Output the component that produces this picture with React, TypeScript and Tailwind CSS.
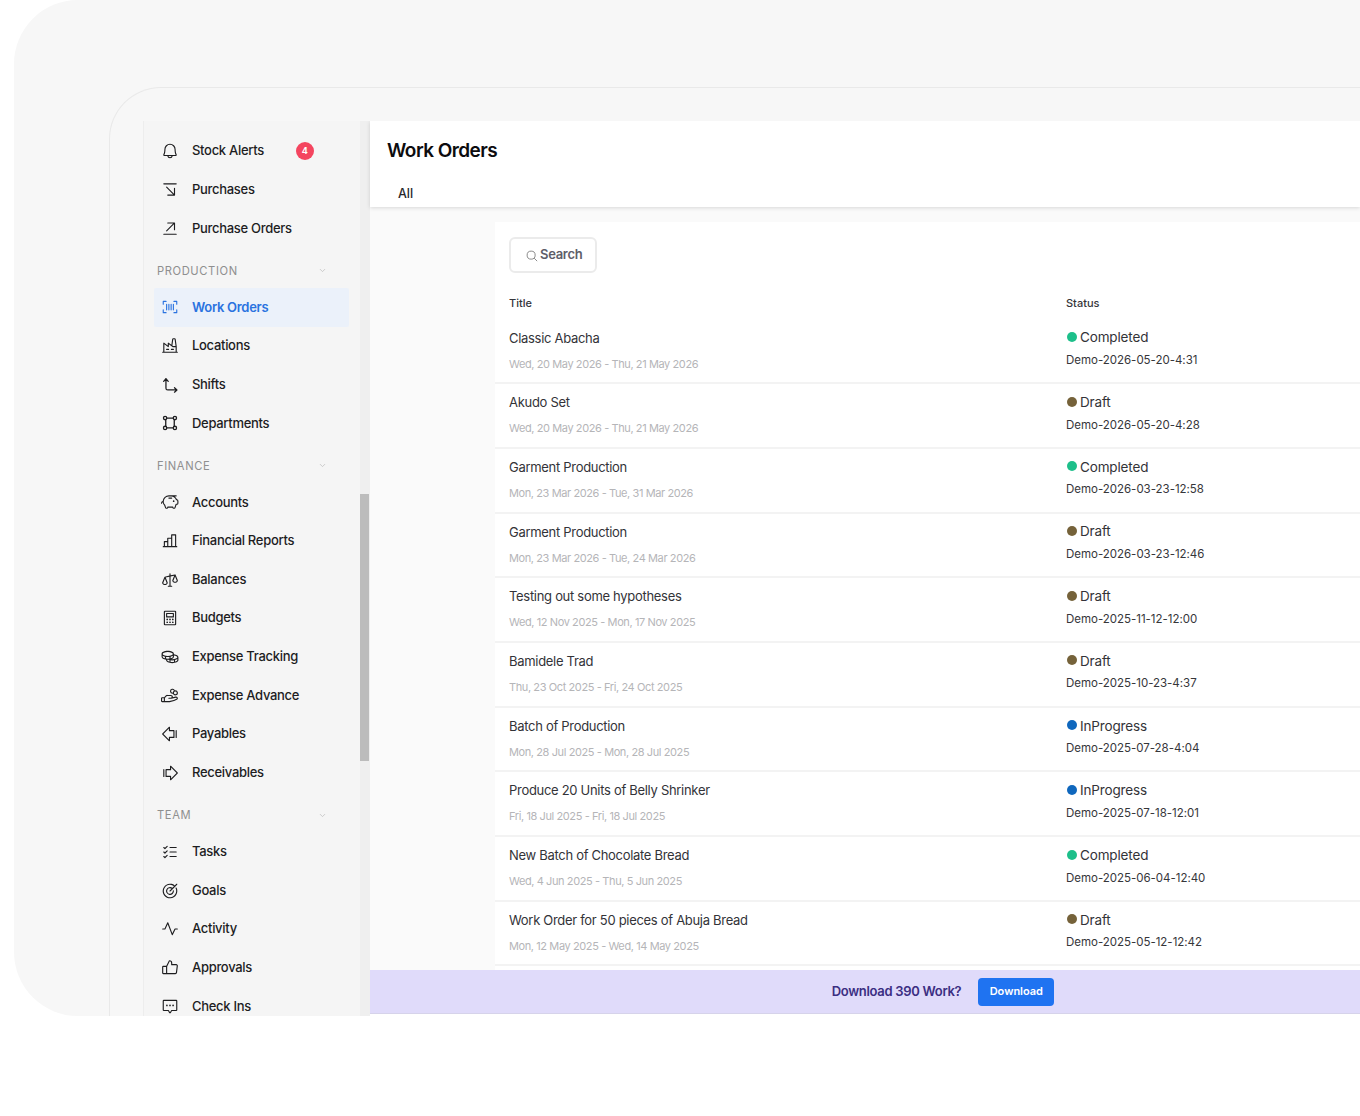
import React from "react";
import { ChevronDown } from "lucide-react";
import {
  PiBell, PiArrowLineDownRight, PiArrowLineUpRight, PiBarcode, PiFactory, PiPiggyBank, PiChartBar, PiScales,
  PiCalculator, PiCoins, PiHandCoins, PiArrowFatLineLeft, PiArrowFatLineRight, PiListChecks, PiTarget,
  PiPulse, PiThumbsUp, PiChatCenteredDots,
} from "react-icons/pi";

const font = "font-['Inter','Liberation_Sans',sans-serif]";

function ShiftsIcon(p: { className?: string }) {
  return (
    <svg viewBox="0 0 20 20" fill="none" stroke="currentColor" strokeWidth="1.4" className={p.className}>
      <path d="M3 6l2.5-3L8 6M5.5 3v10.5a2 2 0 0 0 2 2H17.5M15 13l2.7 2.5L15 18" strokeLinecap="round" strokeLinejoin="round" />
    </svg>
  );
}
function DeptIcon(p: { className?: string }) {
  return (
    <svg viewBox="-1 -1 22 22" fill="none" stroke="currentColor" strokeWidth="1.6" className={p.className}>
      <circle cx="4" cy="4" r="2" /><circle cx="16" cy="4" r="2" /><circle cx="4" cy="16" r="2" /><circle cx="16" cy="16" r="2" />
      <path d="M6 4h8M6 16h8M4.8 6v8M15.2 6v8" />
    </svg>
  );
}

type Item = { label: string; icon: React.ComponentType<{ className?: string }>; badge?: string; active?: boolean };

function NavItem({ item }: { item: Item }) {
  const I = item.icon;
  return (
    <div className={`h-[38.67px] ml-[10px] mr-[11px] flex items-center rounded-[2px] ${item.active ? "bg-[#ebf1fa] text-[#2a73e0]" : "text-[#1d1d1f]"}`}>
      <div className="w-[38px] flex shrink-0 pl-[7px]"><I className="w-[18px] h-[18px]" /></div>
      <span className={`text-[13px] tracking-[-0.3px] ${item.active ? "font-semibold" : "font-medium"}`}>{item.label}</span>
      {item.badge && (
        <span className="ml-[32px] w-[18px] h-[18px] rounded-full bg-[#f4455f] text-white text-[9px] font-bold flex items-center justify-center">{item.badge}</span>
      )}
    </div>
  );
}

function Section({ title }: { title: string }) {
  return (
    <div className="h-[34px] mt-[6.33px] flex items-center justify-between pl-[13px] pr-[33px] text-[#8f8f8f]">
      <span className="text-[11.2px] font-normal tracking-[0.6px]">{title}</span>
      <ChevronDown className="w-[9px] h-[9px] text-[#bdbdbd]" />
    </div>
  );
}

const rows = [
  ["Classic Abacha", "Wed, 20 May 2026 - Thu, 21 May 2026", "Completed", "Demo-2026-05-20-4:31"],
  ["Akudo Set", "Wed, 20 May 2026 - Thu, 21 May 2026", "Draft", "Demo-2026-05-20-4:28"],
  ["Garment Production", "Mon, 23 Mar 2026 - Tue, 31 Mar 2026", "Completed", "Demo-2026-03-23-12:58"],
  ["Garment Production", "Mon, 23 Mar 2026 - Tue, 24 Mar 2026", "Draft", "Demo-2026-03-23-12:46"],
  ["Testing out some hypotheses", "Wed, 12 Nov 2025 - Mon, 17 Nov 2025", "Draft", "Demo-2025-11-12-12:00"],
  ["Bamidele Trad", "Thu, 23 Oct 2025 - Fri, 24 Oct 2025", "Draft", "Demo-2025-10-23-4:37"],
  ["Batch of Production", "Mon, 28 Jul 2025 - Mon, 28 Jul 2025", "InProgress", "Demo-2025-07-28-4:04"],
  ["Produce 20 Units of Belly Shrinker", "Fri, 18 Jul 2025 - Fri, 18 Jul 2025", "InProgress", "Demo-2025-07-18-12:01"],
  ["New Batch of Chocolate Bread", "Wed, 4 Jun 2025 - Thu, 5 Jun 2025", "Completed", "Demo-2025-06-04-12:40"],
  ["Work Order for 50 pieces of Abuja Bread", "Mon, 12 May 2025 - Wed, 14 May 2025", "Draft", "Demo-2025-05-12-12:42"],
];

const dot: Record<string, string> = {
  Completed: "bg-[#1dbf8a]",
  Draft: "bg-[#75623a]",
  InProgress: "bg-[#0f67bd]",
};

function Row({ r }: { r: string[] }) {
  return (
    <div className="h-[64.7px] flex border-b-2 border-[#f3f3f3] pl-[14px]">
      <div className="w-[557px] shrink-0 flex flex-col">
        <div className="mt-[8px] h-[20px] leading-[20px] text-[13px] tracking-[-0.3px] text-[#333338]">{r[0]}</div>
        <div className="mt-[6px] h-[20px] leading-[20px] text-[11px] tracking-[-0.4px] text-[#b5b5b8]">{r[1]}</div>
      </div>
      <div className="flex flex-col">
        <div className="mt-[8px] h-[20px] flex items-center text-[13.5px] tracking-[-0.15px] text-[#333338]">
          <span className={`ml-[1px] w-[10px] h-[10px] rounded-full mr-[3px] -mt-[1px] ${dot[r[2]]}`} />
          {r[2]}
        </div>
        <div className="mt-[2.5px] h-[20px] leading-[20px] text-[11.5px] tracking-[-0.02px] text-[#36363a]">{r[3]}</div>
      </div>
    </div>
  );
}

export default function App() {
  const groups: (Item | string)[] = [
    { label: "Stock Alerts", icon: PiBell, badge: "4" },
    { label: "Purchases", icon: PiArrowLineDownRight },
    { label: "Purchase Orders", icon: PiArrowLineUpRight },
    "PRODUCTION",
    { label: "Work Orders", icon: PiBarcode, active: true },
    { label: "Locations", icon: PiFactory },
    { label: "Shifts", icon: ShiftsIcon },
    { label: "Departments", icon: DeptIcon },
    "FINANCE",
    { label: "Accounts", icon: PiPiggyBank },
    { label: "Financial Reports", icon: PiChartBar },
    { label: "Balances", icon: PiScales },
    { label: "Budgets", icon: PiCalculator },
    { label: "Expense Tracking", icon: PiCoins },
    { label: "Expense Advance", icon: PiHandCoins },
    { label: "Payables", icon: PiArrowFatLineLeft },
    { label: "Receivables", icon: PiArrowFatLineRight },
    "TEAM",
    { label: "Tasks", icon: PiListChecks },
    { label: "Goals", icon: PiTarget },
    { label: "Activity", icon: PiPulse },
    { label: "Approvals", icon: PiThumbsUp },
    { label: "Check Ins", icon: PiChatCenteredDots },
  ];
  return (
    <div className={`${font} w-[1360px] h-[1116px] bg-white overflow-hidden`}>
      <div className="ml-[14px] h-[1016px] rounded-l-[64px] bg-[#f7f7f7] pl-[95px] pt-[87px] overflow-hidden">
        <div className="h-[929px] border-l border-t border-[#e9e9e9] rounded-tl-[52px] pl-[33px] pt-[33px]">
          <div className="flex h-[896px] overflow-hidden">
            <aside className="w-[217px] shrink-0 bg-[#f5f5f5] border-l border-[#ededed] pt-[10.7px] overflow-hidden">
              {groups.map((g) =>
                typeof g === "string" ? <Section key={g} title={g} /> : <NavItem key={g.label} item={g} />
              )}
            </aside>
            <div className="w-[10px] shrink-0 bg-[#efefef]">
              <div className="mt-[373px] w-[9px] h-[267px] bg-[#bcbcbc]" />
            </div>
            <main className="flex-1 min-w-0 flex flex-col bg-[#fafafa]">
              <header className="h-[86px] shrink-0 bg-white shadow-[0_1px_4px_rgba(0,0,0,0.14)] flex flex-col">
                <h1 className="ml-[17px] mt-[17px] h-[26px] leading-[26px] text-[19px] font-semibold tracking-[-0.55px] text-[#0c0c0e]">Work Orders</h1>
                <div className="ml-[28px] mt-[20.5px] text-[12.5px] font-medium leading-[18px] text-[#26262a]">All</div>
              </header>
              <div className="h-[763px] shrink-0 overflow-hidden pl-[125px] pt-[15px]">
                <section className="bg-white h-[748px]">
                  <div className="pt-[15px] pl-[14px]">
                    <button className="w-[88px] h-[36px] rounded-[6px] border-2 border-[#ebebeb] flex items-center pl-[15px] text-[#5d5d68] text-[13px] font-semibold tracking-[-0.3px]">
                      <svg viewBox="0 0 14 14" fill="none" stroke="#777" strokeWidth="1" className="w-[12px] h-[12px] mr-[2px] mt-[2px]">
                        <circle cx="6" cy="6" r="4.7" /><path d="M9.5 9.5L13 13" />
                      </svg>
                      Search
                    </button>
                  </div>
                  <div className="flex pl-[14px] mt-[22px] h-[16px] leading-[16px] text-[11px] font-medium text-[#35353a]">
                    <div className="w-[557px]">Title</div>
                    <div>Status</div>
                  </div>
                  <div className="mt-[8.5px]">
                    {rows.map((r, i) => <Row key={i} r={r} />)}
                  </div>
                </section>
              </div>
              <div className="h-[44px] shrink-0 bg-[#e0dbfa] border-b border-[#d6d3ea] flex items-center justify-center pl-[156px]">
                <span className="text-[13px] font-semibold tracking-[-0.3px] text-[#3b2e82] mr-[17px]">Download 390 Work?</span>
                <button className="w-[76px] h-[28px] rounded-[4px] bg-[#1f73f1] text-white text-[11px] font-semibold">Download</button>
              </div>
              <div className="h-[2px] bg-white" />
            </main>
          </div>
        </div>
      </div>
    </div>
  );
}
